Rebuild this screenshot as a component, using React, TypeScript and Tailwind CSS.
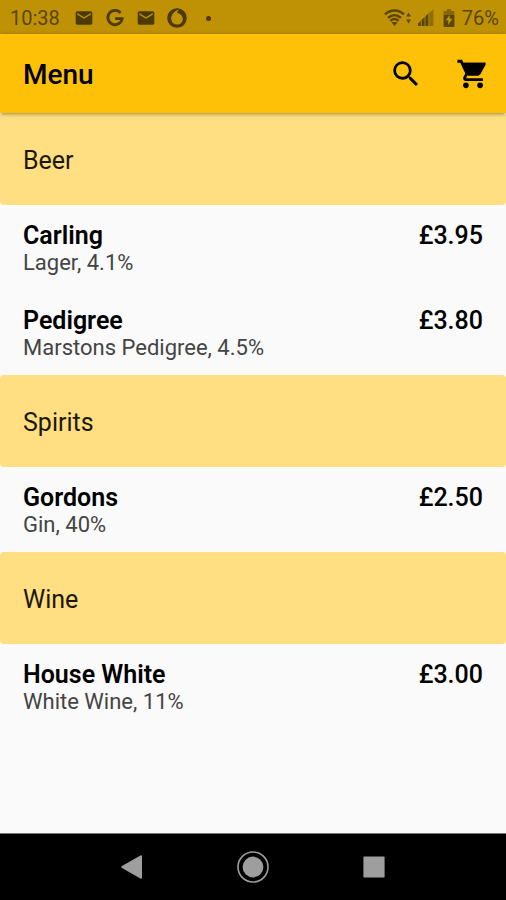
import { MdEmail, MdSearch } from 'react-icons/md'

interface Drink {
    name: string
    description: string
    price: string
}

interface MenuSectionProps {
    title: string
    drinks: Drink[]
}

const sections: MenuSectionProps[] = [
    {
        title: 'Beer',
        drinks: [
            { name: 'Carling', description: 'Lager, 4.1%', price: '£3.95' },
            { name: 'Pedigree', description: 'Marstons Pedigree, 4.5%', price: '£3.80' },
        ],
    },
    {
        title: 'Spirits',
        drinks: [{ name: 'Gordons', description: 'Gin, 40%', price: '£2.50' }],
    },
    {
        title: 'Wine',
        drinks: [{ name: 'House White', description: 'White Wine, 11%', price: '£3.00' }],
    },
]

function GoogleIcon() {
    return (
        <svg className="h-5 w-5" viewBox="0 0 20 20" fill="none" stroke="currentColor" strokeWidth="2.8">
            <path d="M15.6 4.9A7.2 7.2 0 1 0 17.2 10.6H10.2" />
        </svg>
    )
}

function VodafoneIcon() {
    return (
        <svg className="h-5 w-5" viewBox="0 0 20 20" fill="currentColor">
            <path
                fillRule="evenodd"
                d="M10 0.2a9.8 9.8 0 1 0 0 19.6a9.8 9.8 0 0 0 0-19.6ZM12.8 1.4C11.2 2 10.2 3.4 10.2 5C13.6 5.6 15.8 8 15.8 11C15.8 14.2 13.2 16.6 10 16.6C6.6 16.6 4.2 14.2 4.2 10.8C4.2 6.2 8.2 2 12.8 1.4Z"
            />
        </svg>
    )
}

function WifiIcon() {
    return (
        <svg className="h-5 w-7" viewBox="0 0 28 20" fill="none" stroke="currentColor" strokeWidth="2.4">
            <path d="M1 6.4C6.4 1.2 14.6 1.2 20 6.4" />
            <path d="M4 9.8C8 6.2 13 6.2 17 9.8" />
            <path d="M6.4 12.8C9 10.6 12 10.6 14.6 12.8" />
            <path d="M7.4 14L10.5 18L13.6 14Z" fill="currentColor" stroke="none" />
            <path d="M22.2 8.6L24.6 4.4L27 8.6ZM22.2 11.4L24.6 15.6L27 11.4Z" fill="currentColor" stroke="none" />
        </svg>
    )
}

function SignalIcon() {
    return (
        <svg className="h-5 w-5" viewBox="0 0 20 20" fill="currentColor">
            <path d="M2 18V15.6L4.8 12.8V18ZM5.6 18V12L8.6 9V18ZM9.4 18V8.2L12.4 5.2V18Z" />
            <path d="M13.2 18V4.6L17.4 1.4V18Z" opacity="0.45" />
        </svg>
    )
}

function BatteryIcon() {
    return (
        <svg className="h-5 w-3" viewBox="0 0 12 20" fill="currentColor">
            <path d="M4 1H8V3H10.4Q11.4 3 11.4 4V7H0.6V4Q0.6 3 1.6 3H4Z" opacity="0.55" />
            <path
                fillRule="evenodd"
                d="M0.6 7H11.4V18Q11.4 19 10.4 19H1.6Q0.6 19 0.6 18ZM6.8 7L2.6 12.2H5.2V17L9.4 10.8H6.8Z"
            />
        </svg>
    )
}

function CartIcon() {
    return (
        <svg className="h-[34px] w-[34px]" viewBox="0 0 24 24" fill="currentColor">
            <circle cx="7" cy="20" r="2" />
            <circle cx="17" cy="20" r="2" />
            <path d="M5 4H21L16 13H8.5Z" />
            <path d="M1 2v2h2l3.6 7.59-1.35 2.45c-.16.28-.25.61-.25.96 0 1.1.9 2 2 2h12v-2H7.42c-.14 0-.25-.11-.25-.25l.03-.12.9-1.63h7.45c.75 0 1.41-.41 1.75-1.03l3.58-6.49c.08-.14.12-.31.12-.48 0-.55-.45-1-1-1H5.21l-.94-2H1z" />
        </svg>
    )
}

function StatusBar() {
    return (
        <div className="flex h-[34px] items-center justify-between bg-[#bf9105] pt-[2px] pr-[7px] pl-[10px] text-xl text-[#5a4505]">
            <div className="flex items-center">
                <span className="mr-[14px]">10:38</span>
                <div className="flex items-center gap-[11px] text-[#4d3a03]">
                    <MdEmail className="h-5 w-5" />
                    <GoogleIcon />
                    <MdEmail className="h-5 w-5" />
                    <VodafoneIcon />
                    <span className="ml-2 h-[5px] w-[5px] rounded-full bg-current" />
                </div>
            </div>
            <div className="flex items-center gap-[7px]">
                <div className="flex items-center gap-1">
                    <WifiIcon />
                    <SignalIcon />
                </div>
                <BatteryIcon />
                <span>76%</span>
            </div>
        </div>
    )
}

function AppBar() {
    return (
        <header className="relative flex h-[79px] items-center bg-[#ffc107] pl-[23px] shadow-[0_1px_4px_rgba(0,0,0,0.4)]">
            <h1 className="flex-1 pt-[3px] text-[28px] font-medium">Menu</h1>
            <button type="button" aria-label="Search" className="flex h-full w-[67px] items-center justify-center">
                <MdSearch className="h-[34px] w-[34px]" />
            </button>
            <button type="button" aria-label="Cart" className="flex h-full w-[67px] items-center justify-center">
                <CartIcon />
            </button>
        </header>
    )
}

function MenuSection({ title, drinks }: MenuSectionProps) {
    return (
        <section>
            <h2 className="flex h-[92px] items-center rounded-sm bg-[#ffdf82] px-[23px] pt-[3px] text-[25px] text-[#1c1808]">
                {title}
            </h2>
            <ul>
                {drinks.map((drink) => (
                    <li key={drink.name} className="flex h-[85px] items-start justify-between px-[23px] pt-[17px]">
                        <div>
                            <h3 className="text-[25px] leading-7 font-semibold">{drink.name}</h3>
                            <p className="text-[22px] leading-[26px] text-[#444]">{drink.description}</p>
                        </div>
                        <span className="text-[25px] leading-7 font-medium">{drink.price}</span>
                    </li>
                ))}
            </ul>
        </section>
    )
}

function NavigationBar() {
    return (
        <nav className="flex h-[67px] items-center justify-center gap-[73px] border-t border-[#777] bg-black text-[#9e9e9e]">
            <button type="button" aria-label="Back" className="flex h-12 w-12 items-center justify-center">
                <svg className="h-8 w-8" viewBox="0 0 32 32" fill="currentColor">
                    <path d="M5.6 15.2L24.4 4.4Q26 3.6 26 5.2V26.8Q26 28.4 24.4 27.6L5.6 16.8Q4.6 16 5.6 15.2Z" />
                </svg>
            </button>
            <button type="button" aria-label="Home" className="flex h-12 w-12 items-center justify-center">
                <svg className="h-8 w-8" viewBox="0 0 32 32" fill="currentColor">
                    <circle cx="16" cy="16" r="15" fill="none" stroke="currentColor" strokeWidth="1.6" />
                    <circle cx="16" cy="16" r="10.4" />
                </svg>
            </button>
            <button type="button" aria-label="Recent apps" className="flex h-12 w-12 items-center justify-center">
                <svg className="h-8 w-8" viewBox="0 0 32 32" fill="currentColor">
                    <rect x="5.4" y="5.4" width="21.2" height="21.2" rx="1" />
                </svg>
            </button>
        </nav>
    )
}

export default function App() {
    return (
        <div className="flex min-h-screen flex-col bg-[#fafafa] font-[Roboto,sans-serif] text-black">
            <StatusBar />
            <AppBar />
            <main className="flex-1">
                {sections.map((section) => (
                    <MenuSection key={section.title} {...section} />
                ))}
            </main>
            <NavigationBar />
        </div>
    )
}
